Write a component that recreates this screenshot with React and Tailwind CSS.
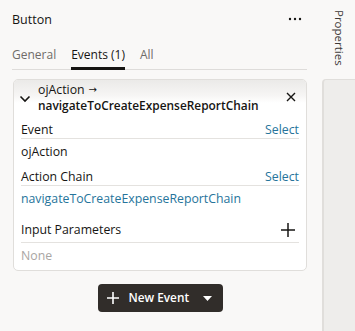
import React from "react";

export default function App() {
  const font = { fontFamily: '"Open Sans", "Noto Sans", sans-serif' };
  return (
    <div className="flex w-[355px] h-[331px] bg-[#f9f8f7] text-[#161513] overflow-hidden" style={font}>
      <div className="w-[322px] h-full flex flex-col pl-[12px] pr-[15px]">
        <div className="h-[40px] flex items-center justify-between">
          <span className="text-[12.5px] font-medium">Button</span>
          <svg width="14" height="4" viewBox="0 0 14 4" className="mr-[5px] mt-[-2px]">
            <circle cx="2" cy="2" r="1.2" fill="#161513" />
            <circle cx="7" cy="2" r="1.2" fill="#161513" />
            <circle cx="12" cy="2" r="1.2" fill="#161513" />
          </svg>
        </div>
        <div className="h-[30px] flex items-stretch gap-[15px] border-b border-[#dedcda] text-[12px]">
          <div className="flex items-center text-[#6f6c69]">General</div>
          <div className="flex items-center relative">
            Events (1)
            <div className="absolute left-0 right-0 bottom-[-1px] h-[3px] bg-[#161513]" />
          </div>
          <div className="flex items-center text-[#6f6c69]">All</div>
        </div>
        <div className="mt-[9px] ml-[1px] border border-[#e0dedb] rounded-[5px] bg-white overflow-hidden">
          <div className="h-[38px] flex items-start bg-linear-to-b from-[#ebeae8] from-[0%] via-[#f6f5f4] via-[40%] to-white to-[60%] pl-[4px] pr-[10px] pt-[2px]">
            <svg width="12" height="8" viewBox="0 0 12 8" className="mt-[13px] ml-[1px] mr-[7px]">
              <path d="M1.5 1.5 L6 6 L10.5 1.5" fill="none" stroke="#161513" strokeWidth="1.6" />
            </svg>
            <div className="flex-1 flex flex-col text-[12.3px]">
              <div className="h-[15px] leading-[14px] flex items-center gap-[4px]">
                <span>ojAction</span>
                <span className="text-[10px] leading-[10px]" style={{ fontFamily: '"DejaVu Sans", sans-serif' }}>→</span>
              </div>
              <div className="h-[15px] leading-[14px] flex items-center font-semibold text-[11.9px]">navigateToCreateExpenseReportChain</div>
            </div>
            <svg width="10" height="10" viewBox="0 0 10 10" className="mt-[10px]">
              <path d="M1 1 L9 9 M9 1 L1 9" stroke="#161513" strokeWidth="1.4" />
            </svg>
          </div>
          <div className="px-[7px] text-[12.3px]">
            <div className="h-[21px] flex items-end justify-between border-b border-[#e4e2df]">
              <span className="leading-[16px] font-medium">Event</span>
              <span className="leading-[16px] text-[#26749b]">Select</span>
            </div>
            <div className="h-[26px] flex items-center">ojAction</div>
            <div className="h-[21px] flex items-end justify-between border-b border-[#e4e2df]">
              <span className="leading-[16px] font-medium">Action Chain</span>
              <span className="leading-[16px] text-[#26749b]">Select</span>
            </div>
            <div className="h-[27px] flex items-center text-[#26749b]">navigateToCreateExpenseReportChain</div>
            <div className="h-[30px] flex items-end justify-between border-b border-[#e4e2df] pb-[4px]">
              <span className="leading-[16px] font-medium">Input Parameters</span>
              <svg width="16" height="16" viewBox="0 0 16 16" className="mr-[3px]">
                <path d="M8 1 V15 M1 8 H15" stroke="#161513" strokeWidth="1.5" />
              </svg>
            </div>
            <div className="h-[27px] flex items-center text-[#a9a6a3]">None</div>
          </div>
        </div>
        <div className="mt-[13px] flex justify-center pl-[1px]">
          <button className="w-[125px] h-[28px] rounded-[4px] bg-[#312d2a] flex items-center text-white pl-[9px]">
            <svg width="12" height="12" viewBox="0 0 12 12">
              <path d="M6 0 V12 M0 6 H12" stroke="#ffffff" strokeWidth="1.6" />
            </svg>
            <span className="ml-[10px] text-[11.8px] font-semibold">New Event</span>
            <svg width="9" height="5" viewBox="0 0 9 5" className="ml-[14px]">
              <path d="M0 0 H9 L4.5 5 Z" fill="#ffffff" />
            </svg>
          </button>
        </div>
      </div>
      <div className="w-[33px] h-full flex flex-col">
        <div className="h-[79px] flex justify-center pt-[10px]">
          <span className="text-[11.5px] leading-[14px] text-[#3d3a37]" style={{ writingMode: "vertical-rl" }}>Properties</span>
        </div>
        <div className="flex-1 bg-[#eeedeb] border-l-2 border-t border-[#e0dedb] rounded-tl-[4px]" />
      </div>
    </div>
  );
}
